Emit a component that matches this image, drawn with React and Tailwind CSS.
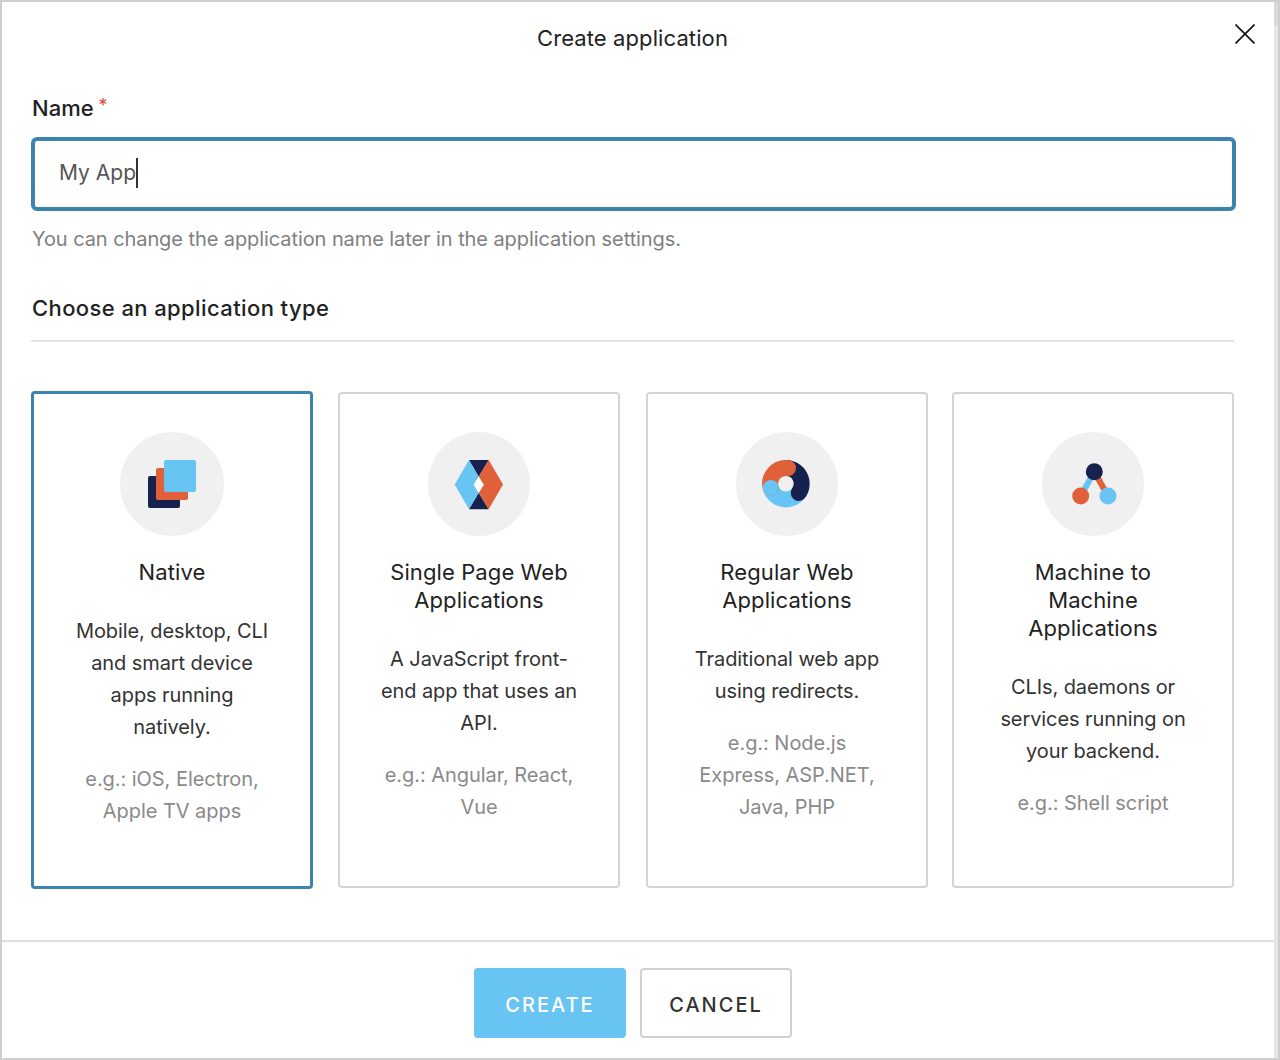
const NativeIcon = () => (
  <svg width="104" height="104" viewBox="0 0 104 104">
    <circle cx="52" cy="52" r="52" fill="#f0f0f0" />
    <rect x="28" y="44" width="32" height="32" rx="2" fill="#16214d" />
    <rect x="36" y="36" width="32" height="32" rx="2" fill="#e0603a" />
    <rect x="44" y="28" width="32" height="32" rx="2" fill="#68c4f3" />
  </svg>
);

const SpaIcon = () => (
  <svg width="102" height="104" viewBox="0 0 102 104">
    <ellipse cx="51" cy="52" rx="51" ry="52" fill="#f0f0f0" />
    <path d="M41 28H60.7L50.7 44.7ZM41 77.3H60.7L50.7 60.7Z" fill="#16214d" />
    <path d="M26.7 52.5L41 28L50.7 44.7L45.7 52.7L50.7 60.7L41 77.3Z" fill="#68c4f3" />
    <path d="M75 52.5L60.7 28L50.7 44.7L55.7 52.7L50.7 60.7L60.7 77.3Z" fill="#e0603a" />
    <path d="M50.7 44.7L55.7 52.7L50.7 60.7L45.7 52.7Z" fill="#fff" />
  </svg>
);

const WebIcon = () => (
  <svg width="102" height="104" viewBox="0 0 102 104" fill="none">
    <ellipse cx="51" cy="52" rx="51" ry="52" fill="#f0f0f0" />
    <path d="M34.8 56A15.7 15.7 0 0 0 65 56" stroke="#68c4f3" strokeWidth="16" strokeLinecap="round" />
    <path d="M50 36A15.7 15.7 0 0 1 62.7 60.9" stroke="#16214d" strokeWidth="16" strokeLinecap="round" />
    <path d="M34.8 56A15.7 15.7 0 0 1 52 36.1" stroke="#e0603a" strokeWidth="16" strokeLinecap="round" />
    <circle cx="34.8" cy="56" r="8" fill="#68c4f3" />
  </svg>
);

const MachineIcon = () => (
  <svg width="102" height="104" viewBox="0 0 102 104" fill="none">
    <ellipse cx="51" cy="52" rx="51" ry="52" fill="#f0f0f0" />
    <path d="M52.3 39.7L38.7 64" stroke="#68c4f3" strokeWidth="6" />
    <path d="M52.3 39.7L66 64" stroke="#e0603a" strokeWidth="6" />
    <circle cx="52.3" cy="39.7" r="8.5" fill="#16214d" />
    <circle cx="38.7" cy="64" r="8.5" fill="#e0603a" />
    <circle cx="66" cy="64" r="8.5" fill="#68c4f3" />
  </svg>
);

const types = [
  {
    title: ["Native"],
    icon: <NativeIcon />,
    desc: ["Mobile, desktop, CLI", "and smart device", "apps running", "natively."],
    eg: ["e.g.: iOS, Electron,", "Apple TV apps"],
    active: true,
  },
  {
    title: ["Single Page Web", "Applications"],
    icon: <SpaIcon />,
    desc: ["A JavaScript front-", "end app that uses an", "API."],
    eg: ["e.g.: Angular, React,", "Vue"],
  },
  {
    title: ["Regular Web", "Applications"],
    icon: <WebIcon />,
    desc: ["Traditional web app", "using redirects."],
    eg: ["e.g.: Node.js", "Express, ASP.NET,", "Java, PHP"],
    nudge: "translate-x-px",
  },
  {
    title: ["Machine to", "Machine", "Applications"],
    icon: <MachineIcon />,
    desc: ["CLIs, daemons or", "services running on", "your backend."],
    eg: ["e.g.: Shell script"],
  },
];

const TypeCard = ({ type: { title, icon, desc, eg, active, nudge } }) => {
  return (
    <div
      className={
        (active
          ? "h-[498px] pt-[38px] border-[3px] border-[#3b85ac] "
          : "h-[496px] my-px pt-[38px] border-2 border-[#d4d4d4] ") +
        "flex flex-col items-center rounded-[4px] text-center " +
        (nudge || "")
      }
    >
      {icon}
      <div className="mt-[22px] text-[22px] leading-[28px] tracking-[0.1px] text-[#222]">
        {title.map((t) => (
          <div key={t}>{t}</div>
        ))}
      </div>
      <div className="mt-[29px] text-[20px] leading-[32px] tracking-[-0.08px] text-[#333]">
        {desc.map((t) => (
          <div key={t}>{t}</div>
        ))}
      </div>
      <div className="mt-[20px] text-[20px] leading-[32px] tracking-[-0.05px] text-[#8a8a8a]">
        {eg.map((t) => (
          <div key={t}>{t}</div>
        ))}
      </div>
    </div>
  );
};

export default function App() {
  return (
    <div className="w-[1280px] h-[1060px] flex bg-white border-2 border-[#cfcfcf] font-['Inter',sans-serif]">
      <div className="relative flex-1 flex flex-col">
        {/* header */}
        <div className="pl-[29px] pr-[40px] pt-[22px] text-center text-[22px] leading-[28px] tracking-[0.1px] text-[#222]">
          Create application
        </div>
        <button className="absolute top-[22px] left-[1233px]">
          <svg width="20" height="20" viewBox="0 0 20 20" fill="none" stroke="#111" strokeWidth="1.6" className="block">
            <path d="M0.5 0.5L19.5 19.5M19.5 0.5L0.5 19.5" />
          </svg>
        </button>

        <div className="flex-1 pl-[29px] pr-[40px]">
          <div className="ml-px mt-[42px] flex gap-[5px] text-[22px] leading-[28px] font-medium text-[#222]">
            Name
            <span className="text-[#e0503a] text-[18px] leading-[24px] font-normal">*</span>
          </div>
          <div className="mt-[15px] -mr-[2px] h-[74px] flex items-center pl-[24px] pb-[2px] rounded-[6px] border-[4px] border-[#3b85ac] text-[21px] text-[#555]">
            My App
            <span className="w-[1.5px] h-[30px] bg-[#333]" />
          </div>
          <div className="ml-px mt-[14px] text-[20px] leading-[28px] tracking-[-0.08px] text-[#808080]">
            You can change the application name later in the application settings.
          </div>
          <div className="mt-[41px] pb-[18px] pl-px border-b-2 border-[#e3e3e3] text-[22px] leading-[28px] tracking-[0.4px] font-medium text-[#222]">
            Choose an application type
          </div>
          <div className="mt-[49px] grid grid-cols-4 gap-[25px]">
            {types.map((type) => (
              <TypeCard key={type.title.join(" ")} type={type} />
            ))}
          </div>
        </div>

        {/* footer */}
        <div className="h-[118px] flex justify-center gap-[14px] pt-[26px] pr-[10px] border-t-2 border-[#dcdcdc]">
          <button className="w-[152px] h-[70px] pt-[3px] rounded-[4px] bg-[#68c4f3] text-white text-[20px] font-medium tracking-[2px]">
            CREATE
          </button>
          <button className="w-[152px] h-[70px] pt-[3px] rounded-[4px] border-2 border-[#d0d0d0] text-[#333] text-[20px] font-medium tracking-[2px]">
            CANCEL
          </button>
        </div>
      </div>
      <div className="w-[4px] flex flex-col">
        <div className="h-[24px] bg-[#d9d9d9]" />
        <div className="flex-1 bg-[#e6e6e6]" />
      </div>
    </div>
  );
}
